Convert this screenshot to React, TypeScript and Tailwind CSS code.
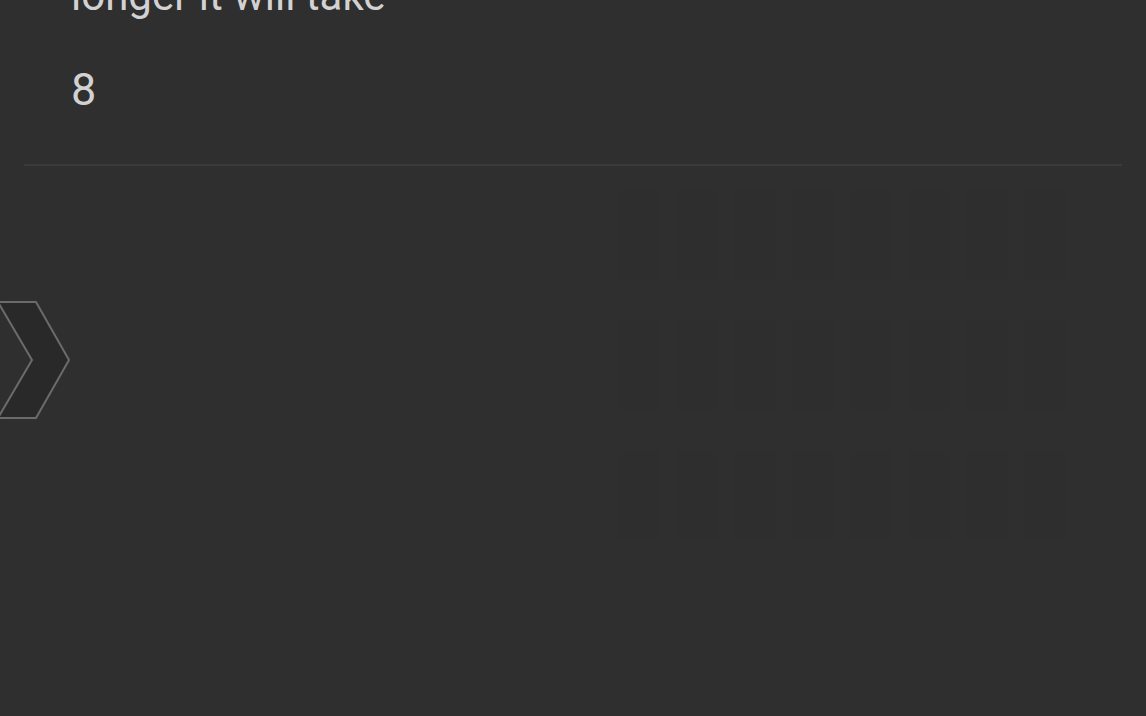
export default function App() {
  return (
    <div className="relative h-[716px] w-[1146px] overflow-hidden bg-[#2f2f2f] font-['Roboto','Liberation_Sans',sans-serif] text-[#d2d2d2]">
      <div className="-mt-[30px] pl-[71px]">
        <p className="text-[42px] leading-[52px]">longer it will take</p>
        <p className="mt-[42px] text-[45px] leading-[52px]">8</p>
      </div>

      <div className="mx-6 mt-[48px] h-[2px] bg-[#3b3b3b]" />

      {/* faint watermark behind the content */}
      <div className="absolute left-[618px] top-[190px] grid grid-cols-8 gap-x-[16px] gap-y-[40px]">
        {Array.from({ length: 24 }).map((_, i) => (
          <div key={i} className="h-[90px] w-[42px] bg-[#2e2e2e]" />
        ))}
      </div>

      <button className="absolute left-0 top-[300px]">
        <svg width="72" height="122" viewBox="0 0 72 122" fill="none">
          <path
            d="M-2 2 H36 L69 60 L36 118 H-2 L32 60 Z"
            fill="#292929"
            stroke="#6b6b6b"
            strokeWidth="2"
            strokeLinejoin="round"
          />
        </svg>
      </button>
    </div>
  )
}
